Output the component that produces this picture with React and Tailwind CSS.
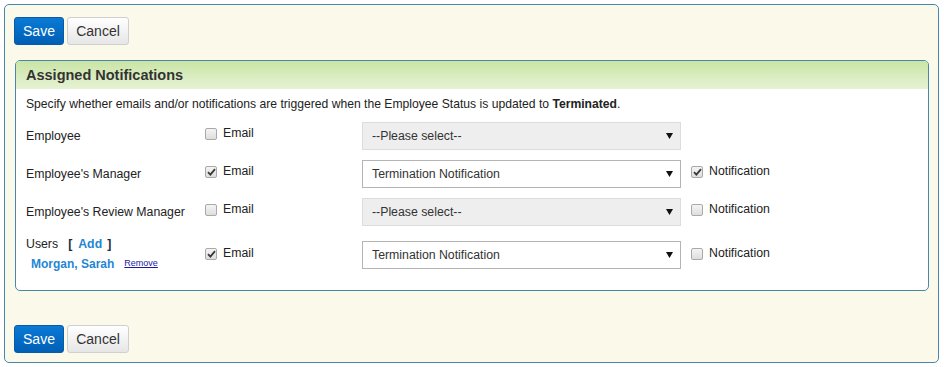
const Checkbox = ({ checked }) => (
  <span className="inline-flex w-[12px] h-[12px] shrink-0 items-center justify-center rounded-[2px] border border-[#a9a9a9] bg-gradient-to-b from-[#f4f4f4] to-[#dedede]">
    {checked && (
      <svg width="9" height="8" viewBox="0 0 9 8">
        <path d="M1 4.2 L3.4 6.6 L8 1.2" fill="none" stroke="#3a3a3a" strokeWidth="1.8" />
      </svg>
    )}
  </span>
);

const Select = ({ value, disabled }) => (
  <div
    className={`flex items-center justify-between w-[319px] h-[28px] pl-[9px] pr-[7px] border text-[12.3px] text-[#333] ${
      disabled ? "bg-[#eeeeee] border-[#dcdcdc]" : "bg-white border-[#b4b4b4]"
    }`}
  >
    <span>{value}</span>
    <svg width="7" height="6" viewBox="0 0 7 6">
      <path d="M0 0 L7 0 L3.5 6 Z" fill="#111" />
    </svg>
  </div>
);

const CheckLabel = ({ checked, label }) => (
  <div className="flex items-center gap-[6px] mb-[5px]">
    <Checkbox checked={checked} />
    <span className="text-[12.3px] text-[#222]">{label}</span>
  </div>
);

const Buttons = () => (
  <div className="flex gap-[3px] pl-[9px]">
    <button className="w-[50px] h-[28px] rounded-[3px] border border-[#0a5aa6] bg-gradient-to-b from-[#0b7ad6] to-[#005fb5] text-white text-[14px]">
      Save
    </button>
    <button className="w-[62px] h-[28px] rounded-[3px] border border-[#cfcfcf] bg-gradient-to-b from-[#ffffff] to-[#e6e6e6] text-[#333] text-[14px]">
      Cancel
    </button>
  </div>
);

const rows = [
  { label: "Employee", email: false, value: "--Please select--", disabled: true, notif: null },
  { label: "Employee's Manager", email: true, value: "Termination Notification", disabled: false, notif: true },
  { label: "Employee's Review Manager", email: false, value: "--Please select--", disabled: true, notif: false },
];

export default function App() {
  return (
    <div className="p-[4px] font-['Liberation_Sans',Arial,sans-serif]">
      <div className="w-[935px] h-[359px] rounded-[5px] border border-[#4a86aa] bg-[#fbfaea] pt-[12px]">
        <Buttons />

        <div className="ml-[10px] mt-[15px] w-[914px] h-[231px] rounded-[5px] border border-[#4a86aa] bg-white overflow-hidden">
          <div className="h-[28px] flex items-center px-[10px] pt-[1px] bg-gradient-to-b from-[#cae5a5] to-[#e6f2d4]">
            <span className="text-[14.5px] font-bold text-[#333]">Assigned Notifications</span>
          </div>

          <div className="px-[10px] pt-[7px] text-[12.3px] text-[#222]">
            <p className="leading-[16px] text-[12.15px]">
              Specify whether emails and/or notifications are triggered when the Employee Status is updated to{" "}
              <b>Terminated</b>.
            </p>

            <div className="mt-[10px] flex flex-col gap-[10px]">
              {rows.map((r) => (
                <div key={r.label} className="flex items-center h-[28px]">
                  <span className="w-[179px] mt-[1px]">{r.label}</span>
                  <div className="w-[157px]">
                    <CheckLabel checked={r.email} label="Email" />
                  </div>
                  <Select value={r.value} disabled={r.disabled} />
                  {r.notif !== null && (
                    <div className="ml-[10px]">
                      <CheckLabel checked={r.notif} label="Notification" />
                    </div>
                  )}
                </div>
              ))}

              <div className="flex items-center mt-[1px] h-[36px]">
                <div className="w-[179px] flex flex-col gap-[3px] -mt-[2px]">
                  <div className="flex items-center h-[16px]">
                    <span>Users</span>
                    <span className="ml-[10px] font-bold text-[#1a2b44]">[</span>
                    <span className="ml-[6px] font-bold text-[#1f86d4]">Add</span>
                    <span className="ml-[5px] font-bold text-[#1a2b44]">]</span>
                  </div>
                  <div className="flex items-center h-[16px] pl-[5px]">
                    <span className="font-bold text-[12px] text-[#1f86d4]">Morgan, Sarah</span>
                    <span className="ml-[10px] text-[9px] underline text-[#1a1aa0]">Remove</span>
                  </div>
                </div>
                <div className="w-[157px] mt-[2px]">
                  <CheckLabel checked label="Email" />
                </div>
                <Select value="Termination Notification" />
                <div className="ml-[10px] mt-[2px]">
                  <CheckLabel checked={false} label="Notification" />
                </div>
              </div>
            </div>
          </div>
        </div>

        <div className="mt-[34px]">
          <Buttons />
        </div>
      </div>
    </div>
  );
}
